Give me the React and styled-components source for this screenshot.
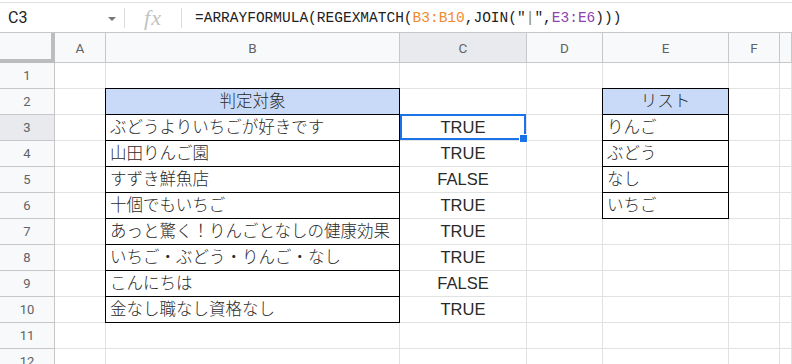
import React from 'react';
import styled, { createGlobalStyle } from 'styled-components';

const GlobalStyle = createGlobalStyle`
  html, body {
    margin: 0;
    padding: 0;
    background: #fff;
    overflow: hidden;
  }
  * {
    box-sizing: border-box;
  }
`;

const Page = styled.div`
  width: 792px;
  height: 364px;
  padding-top: 2px;
  overflow: hidden;
  background: #fff;
  font-family: Arial, "Liberation Sans", "Noto Sans CJK JP", sans-serif;
`;

const FormulaBar = styled.div`
  display: flex;
  align-items: center;
  height: 31px;
  border-top: 1px solid #e1e1e1;
  border-bottom: 1px solid #c7c7c7;
`;

const NameBox = styled.div`
  display: flex;
  align-items: center;
  justify-content: space-between;
  width: 124px;
  padding: 0 8px 0 8px;
  font-family: Roboto, "Liberation Sans", sans-serif;
  font-size: 16px;
  color: #222;
`;

const Caret = styled.span`
  width: 0;
  height: 0;
  margin-top: 2px;
  border-left: 4px solid transparent;
  border-right: 4px solid transparent;
  border-top: 4px solid #777;
`;

const Divider = styled.span`
  width: 1px;
  height: 20px;
  background: #dadce0;
`;

const FxLabel = styled.span`
  width: 56px;
  text-align: center;
  font-family: "Liberation Serif", serif;
  font-style: italic;
  font-size: 22px;
  color: #c2c2c2;
  letter-spacing: 1px;
`;

const Formula = styled.div`
  padding-left: 13px;
  font-family: "Liberation Mono", monospace;
  font-size: 14.5px;
  color: #222;
  white-space: pre;
`;

const Token = styled.span`
  color: ${(p) => p.$color};
`;

const Sheet = styled.div`
  display: grid;
  grid-template-columns: 55px 51px 294px 127px 76px 126px 51px 1fr;
  grid-template-rows: 30px repeat(12, 26px);
`;

const Corner = styled.div`
  background: #f8f9fa;
  border-right: 4px solid #bdbdbd;
  border-bottom: 4px solid #bdbdbd;
`;

const ColHead = styled.div`
  display: flex;
  align-items: center;
  justify-content: center;
  background: ${(p) => (p.$active ? '#e8eaed' : '#f8f9fa')};
  border-right: 1px solid #c7c7c7;
  border-bottom: 1px solid #c7c7c7;
  font-family: Roboto, "Liberation Sans", sans-serif;
  font-size: 13.5px;
  color: #5f6368;
`;

const RowHead = styled.div`
  display: flex;
  align-items: center;
  justify-content: center;
  background: ${(p) => (p.$active ? '#e8eaed' : '#f8f9fa')};
  border-right: 1px solid #c7c7c7;
  border-bottom: 1px solid #c7c7c7;
  font-family: Roboto, "Liberation Sans", sans-serif;
  font-size: 13px;
  color: #5f6368;
`;

const Cell = styled.div`
  position: relative;
  display: flex;
  align-items: flex-end;
  justify-content: ${(p) => (p.$align === 'center' ? 'center' : 'flex-start')};
  padding: 0 4px 2px;
  background: ${(p) => p.$fill || 'transparent'};
  border-right: 1px solid ${(p) => (p.$boxed ? '#000' : '#e2e2e2')};
  border-bottom: 1px solid ${(p) => (p.$boxed ? '#000' : '#e2e2e2')};
  box-shadow: ${(p) =>
    p.$boxed ? '-1px -1px 0 #000, 0 -1px 0 #000, -1px 0 0 #000' : 'none'};
  font-family: Arial, "Liberation Sans", "Noto Sans CJK JP", sans-serif;
  font-size: 16.5px;
  font-weight: ${(p) => (p.$boxed ? 300 : 400)};
  line-height: 21px;
  color: #2a2a2a;
  white-space: nowrap;
`;

const Selection = styled.div`
  position: absolute;
  top: -1px;
  left: 0;
  right: 0;
  bottom: 0;
  border: 2px solid #1a73e8;
  z-index: 2;
`;

const Handle = styled.div`
  position: absolute;
  right: -4px;
  bottom: -5px;
  width: 9px;
  height: 9px;
  background: #1a73e8;
  border: 1px solid #fff;
  z-index: 3;
`;

const columns = ['A', 'B', 'C', 'D', 'E', 'F', ''];

const subjects = [
  'ぶどうよりいちごが好きです',
  '山田りんご園',
  'すずき鮮魚店',
  '十個でもいちご',
  'あっと驚く！りんごとなしの健康効果',
  'いちご・ぶどう・りんご・なし',
  'こんにちは',
  '金なし職なし資格なし',
];
const results = ['TRUE', 'TRUE', 'FALSE', 'TRUE', 'TRUE', 'TRUE', 'FALSE', 'TRUE'];
const list = ['りんご', 'ぶどう', 'なし', 'いちご'];

const HEADER_FILL = '#c9daf8';

const cellAt = (row, col) => {
  if (col === 'B' && row === 2) return { text: '判定対象', align: 'center', fill: HEADER_FILL, boxed: true };
  if (col === 'B' && row >= 3 && row <= 10) return { text: subjects[row - 3], boxed: true };
  if (col === 'C' && row >= 3 && row <= 10) return { text: results[row - 3], align: 'center' };
  if (col === 'E' && row === 2) return { text: 'リスト', align: 'center', fill: HEADER_FILL, boxed: true };
  if (col === 'E' && row >= 3 && row <= 6) return { text: list[row - 3], boxed: true };
  return {};
};

const App = () => {
  const rows = Array.from({ length: 12 }, (_, i) => i + 1);

  return (
    <Page>
      <GlobalStyle />
      <FormulaBar>
        <NameBox>
          C3
          <Caret />
        </NameBox>
        <Divider />
        <FxLabel>fx</FxLabel>
        <Divider />
        <Formula>
          =ARRAYFORMULA(REGEXMATCH(
          <Token $color="#f18a2c">B3:B10</Token>
          ,JOIN("
          <Token $color="#8f8a24">|</Token>
          ",
          <Token $color="#8e44ad">E3:E6</Token>
          )))
        </Formula>
      </FormulaBar>
      <Sheet>
        <Corner />
        {columns.map((c, i) => (
          <ColHead key={i} $active={c === 'C'}>
            {c}
          </ColHead>
        ))}
        {rows.map((r) => (
          <React.Fragment key={r}>
            <RowHead $active={r === 3}>{r}</RowHead>
            {columns.map((c, i) => {
              const cell = cellAt(r, c);
              return (
                <Cell key={i} $align={cell.align} $fill={cell.fill} $boxed={cell.boxed}>
                  {cell.text}
                  {c === 'C' && r === 3 && (
                    <Selection>
                      <Handle />
                    </Selection>
                  )}
                </Cell>
              );
            })}
          </React.Fragment>
        ))}
      </Sheet>
    </Page>
  );
};

export default App;
